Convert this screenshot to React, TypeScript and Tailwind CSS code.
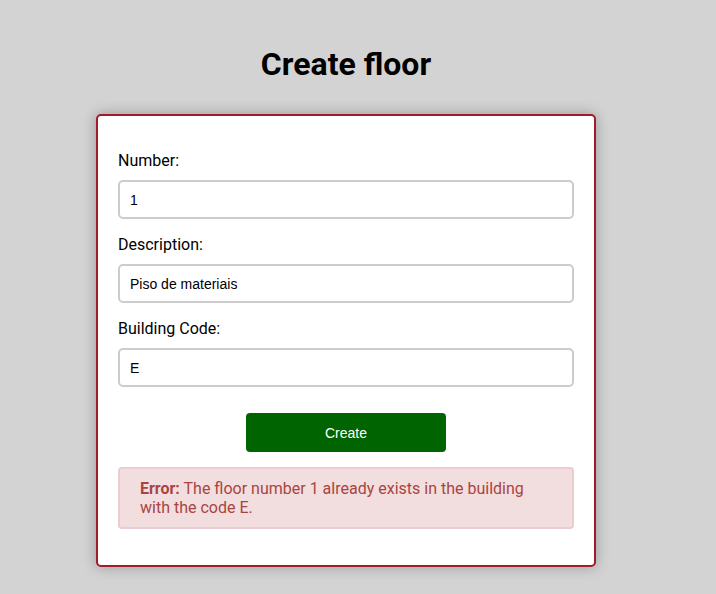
const fields = [
  { label: 'Number:', value: '1' },
  { label: 'Description:', value: 'Piso de materiais' },
  { label: 'Building Code:', value: 'E' }
]

export default function App() {
  return (
    <div className="min-h-[594px] w-full bg-[#d3d3d3] font-['Roboto',sans-serif]">
      <div className="flex w-[692px] flex-col items-center pt-[46px] pb-[28px]">
        <h1 className="text-[32px] font-bold leading-[37px] text-black">Create floor</h1>

        <form
          className="mt-[31px] w-[500px] rounded-[5px] border-2 border-[#a11c27] bg-white px-5 pt-[35px] pb-[36px] shadow-[0_0_14px_rgba(0,0,0,0.28)]"
          onSubmit={(e) => e.preventDefault()}
        >
          {fields.map((f) => (
            <div key={f.label} className="mb-4 flex flex-col">
              <label className="mb-[10px] text-base leading-[19px] text-black">{f.label}</label>
              <input
                readOnly
                value={f.value}
                className="h-[39px] w-full rounded-[5px] border-2 border-[#cccccc] bg-white px-[10px] font-['Liberation_Sans',Arial,sans-serif] text-sm text-black outline-none"
              />
            </div>
          ))}

          <div className="mt-[26px] flex justify-center">
            <button
              type="submit"
              className="h-[39px] w-[200px] rounded-[4px] bg-[#006400] font-['Liberation_Sans',Arial,sans-serif] text-sm text-white"
            >
              Create
            </button>
          </div>

          <p className="mt-[15px] rounded-[4px] border-2 border-[#ebccd1] bg-[#f2dede] px-5 py-[10px] text-base leading-[19px] text-[#a94442]">
            <strong className="font-bold">Error:</strong> The floor number 1 already exists in the building with the code E.
          </p>
        </form>
      </div>
    </div>
  )
}
